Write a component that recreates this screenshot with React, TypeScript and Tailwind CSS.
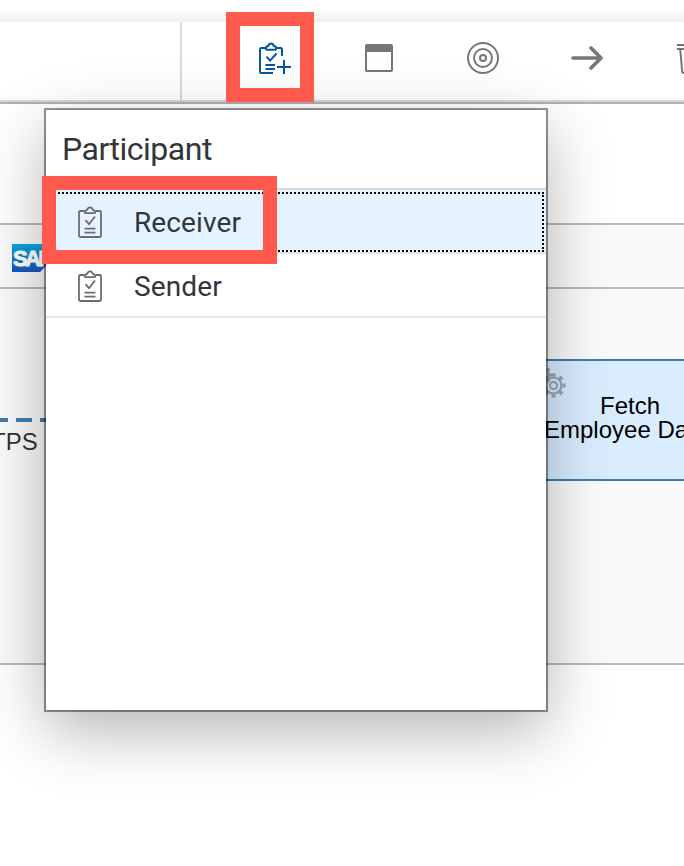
import type { ReactNode } from "react";

function Clipboard({ className }: { className?: string }) {
  return (
    <svg className={className} width="24" height="32" viewBox="0 0 24 32" fill="none" stroke="currentColor" strokeWidth="1.8" strokeLinejoin="round">
      <path d="M6 5H2.2Q1 5 1 6.2V29.8Q1 31 2.2 31H21.8Q23 31 23 29.8V6.2Q23 5 21.8 5H18" />
      <path d="M6.8 6.5Q6.8 4 9.3 3.8Q10 1.3 12 1.3Q14 1.3 14.7 3.8Q17.2 4 17.2 6.5Q17.2 7.2 16 7.2H8Q6.8 7.2 6.8 6.5Z" />
      <path d="M7.5 14.2L11 18.2L17 10.5M6.5 22.7H17.5M6.5 26.7H17.5" />
    </svg>
  );
}

function ClipboardAdd() {
  return (
    <svg width="34" height="34" viewBox="0 0 34 34" fill="none" stroke="#0854a0" strokeWidth="2" strokeLinejoin="round">
      <path d="M7 6H3.2Q2 6 2 7.2V29.8Q2 31 3.2 31H15M19 6H22.8Q24 6 24 7.2V14" />
      <path d="M7.8 7Q7.8 4.3 10.2 4.1Q11 1.5 13 1.5Q15 1.5 15.8 4.1Q18.2 4.3 18.2 7Q18.2 7.8 17 7.8H9Q7.8 7.8 7.8 7Z" />
      <path d="M8.5 14.7L12 18.7L18.5 11.5M7.5 23H17M7.5 27H17" />
      <path d="M26 18V32M19 25H33" />
    </svg>
  );
}

function Row({ label, selected }: { label: string; selected?: boolean }) {
  return (
    <div className={`flex h-16 items-center border-b-2 border-[#e5e5e5] pl-8 text-[28px] text-[#32363a] ${selected ? "relative bg-[#e5f2ff]" : "bg-white"}`}>
      {selected && <span className="absolute top-[2px] right-[2px] bottom-0 left-0 border-2 border-dotted border-black" />}
      <Clipboard className="mt-[2px] shrink-0 text-[#6a6d70]" />
      <span className="mt-[4px] ml-8 leading-none tracking-[0.12px]">{label}</span>
    </div>
  );
}

function Tool({ children }: { children: ReactNode }) {
  return <div className="flex h-full w-[104px] shrink-0 items-center justify-center text-[#74777a]">{children}</div>;
}

function Toolbar() {
  return (
    <div className="flex h-[82px] border-b-2 border-[#b1b1b1] bg-white">
      <div className="flex w-full border-b-2 border-[#d5d5d5] pb-[6px]">
        <div className="-mb-[6px] w-[182px] shrink-0 border-r-2 border-[#d9d9d9]" />
        <div className="flex w-[502px] overflow-hidden pl-[41px]">
          <Tool>
            <div className="mt-px mr-[1px]"><ClipboardAdd /></div>
          </Tool>
          <Tool>
            <svg width="28" height="28" viewBox="0 0 28 28">
              <rect x="1" y="1" width="26" height="26" rx="1" fill="none" stroke="currentColor" strokeWidth="2" />
              <path d="M1 1H27V8H1Z" fill="currentColor" />
            </svg>
          </Tool>
          <Tool>
            <svg width="32" height="32" viewBox="0 0 32 32" fill="none" stroke="currentColor" strokeWidth="2">
              <circle cx="16" cy="16" r="15" />
              <circle cx="16" cy="16" r="9" />
              <circle cx="16" cy="16" r="3" />
            </svg>
          </Tool>
          <Tool>
            <svg width="32" height="26" viewBox="0 0 32 26" fill="none" stroke="currentColor" strokeWidth="3.6" strokeLinecap="round" strokeLinejoin="round">
              <path d="M2 13H30M20 3L30 13L20 23" />
            </svg>
          </Tool>
          <svg className="mt-[21px] ml-[38px] shrink-0" width="26" height="34" viewBox="0 0 26 34" fill="none" stroke="#74777a" strokeWidth="2">
            <path d="M0 2H26M0 6H26M3.200 6L5.200 29Q5.400 30 6.500 30H20L23 6" />
          </svg>
        </div>
      </div>
    </div>
  );
}

function SapLogo() {
  return (
    <svg width="56" height="28" viewBox="0 0 56 28">
      <defs>
        <linearGradient id="sap" x1="0" y1="0" x2="0" y2="1">
          <stop offset="0" stopColor="#0aa5e5" />
          <stop offset="1" stopColor="#1a55b8" />
        </linearGradient>
      </defs>
      <path d="M0 0H56L28 28H0Z" fill="url(#sap)" />
      <text x="1" y="22" fill="#fff" stroke="#fff" strokeWidth="1" fontFamily="Liberation Sans, sans-serif" fontSize="22" fontWeight="700" letterSpacing="-2.6">SAP</text>
    </svg>
  );
}

const teeth = [0, 45, 90, 135, 180, 225, 270, 315];

function Gears() {
  return (
    <svg className="absolute -top-[1px] left-0" width="38" height="44" viewBox="0 0 38 44" fill="none" stroke="#98a4ae">
      <g transform="translate(23.5 25.5)">
        <circle r="8" strokeWidth="2.2" />
        <circle r="3.6" strokeWidth="2" />
        {teeth.map((a) => <path key={a} d="M-2 -10.500H2" strokeWidth="3" transform={`rotate(${a})`} />)}
      </g>
      <g transform="translate(13 15)">
        <circle r="6" strokeWidth="2.4" />
        {teeth.map((a) => <path key={a} d="M-1.500 -8H1.500" strokeWidth="2.400" transform={`rotate(${a})`} />)}
      </g>
    </svg>
  );
}

function Canvas() {
  return (
    <div className="pt-[119px] font-['Liberation_Sans',Arial,sans-serif] text-[24px]">
      <div className="border-y-2 border-[#bbb] bg-[#fafafa]">
        <div className="flex h-[64px] items-center border-b-2 border-[#bbb] pl-3">
          <div className="mt-[4px]"><SapLogo /></div>
        </div>
        <div className="flex h-[374px] justify-between overflow-hidden">
          <div className="w-[70px] shrink-0 pt-[129px]">
            <svg className="block" width="70" height="4">
              <path d="M-8 2H70" stroke="#427cac" strokeWidth="4" strokeDasharray="16 8" />
            </svg>
            <div className="mt-[8px] -ml-[41px] leading-[24px] whitespace-nowrap text-[#333]">HTTPS</div>
          </div>
          <div className="relative mt-[70px] h-[122px] w-[154px] shrink-0 border-y-2 border-[#427cac] bg-[#d9edff]">
            <Gears />
            <div className="-mr-[20px] ml-[14px] w-[172px] pt-[33px] leading-[24px] text-black">
              <div className="text-center">Fetch</div>
              <div className="whitespace-nowrap">Employee Data</div>
            </div>
          </div>
        </div>
      </div>
    </div>
  );
}

export default function App() {
  return (
    <div className="relative h-[866px] w-[684px] overflow-hidden bg-white font-[Roboto,'Noto_Sans',sans-serif]">
      <div className="h-[22px] bg-linear-to-b from-white from-45% to-[#eeeeee]" />
      <Toolbar />
      <Canvas />

      {/* Participant menu */}
      <div className="absolute top-[110px] left-[46px] h-[600px] w-[500px] bg-white shadow-[0_0_0_2px_rgba(0,0,0,0.42),0_20px_60px_rgba(0,0,0,0.3)]">
        <div className="flex h-20 items-center border-b-2 border-[#d9d9d9] pl-4 text-[32px] leading-none tracking-[-0.5px] text-[#32363a]">Participant</div>
        <Row label="Receiver" selected />
        <Row label="Sender" />
      </div>

      {/* Highlight frames */}
      <div className="absolute top-[12px] left-[226px] h-[90px] w-[88px] border-14 border-[#ff5a4d]" />
      <div className="absolute top-[176px] left-[42px] h-[88px] w-[235px] border-14 border-[#ff5a4d]" />
    </div>
  );
}
